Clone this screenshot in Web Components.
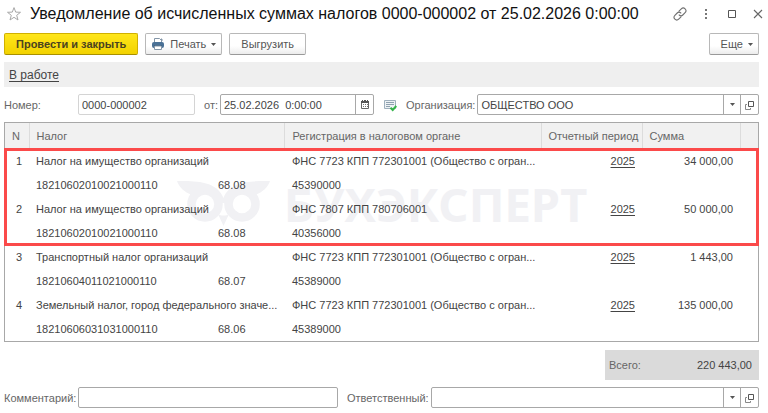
<!DOCTYPE html>
<html lang="ru">
<head>
<meta charset="UTF-8">
<meta name="viewport" content="width=device-width, initial-scale=1">
<title>Уведомление об исчисленных суммах налогов</title>
<style>
  body {
    margin: 0;
    background: #fff;
    color: #444;
    font: 11px/16px "Liberation Sans", Arial, sans-serif;
  }
</style>
</head>
<body>
<app-form>
  <app-titlebar slot="title">Уведомление об исчисленных суммах налогов 0000-000002 от 25.02.2026 0:00:00</app-titlebar>

  <app-toolbar slot="toolbar">
    <app-button primary>Провести и закрыть</app-button>
    <app-button icon="print" menu>Печать</app-button>
    <app-button>Выгрузить</app-button>
    <app-button slot="end" menu>Еще</app-button>
  </app-toolbar>

  <app-status slot="status">В работе</app-status>

  <app-row slot="fields">
    <app-field class="number" label="Номер:" value="0000-000002" wide-label light></app-field>
    <app-field class="date" label="от:" value="25.02.2026  0:00:00" action="calendar"></app-field>
    <app-icon name="posted"></app-icon>
    <app-field class="org" label="Организация:" value="ОБЩЕСТВО ООО" select action="open"></app-field>
  </app-row>

  <app-tax-table slot="table"></app-tax-table>
  <app-total slot="total" label="Всего:">220 443,00</app-total>

  <app-row slot="footer">
    <app-field class="comment" label="Комментарий:" wide-label></app-field>
    <app-field class="person" label="Ответственный:" select action="open"></app-field>
  </app-row>
</app-form>

<script>
const ICONS = {
  star: '<svg width="16" height="16" viewBox="0 0 16 16" fill="none" stroke="#a8a8a8"><path d="M8 1.600l1.700 4.500 4.800.2-3.800 3 1.300 4.700L8 11.300 4 14l1.300-4.700-3.800-3 4.800-.2z"/></svg>',
  link: '<svg width="14" height="14" viewBox="0 0 14 14" fill="none" stroke="#707070" stroke-width="1.1" stroke-linecap="round"><path d="M6 4.2l2.3-2.3a2.6 2.6 0 0 1 3.8 3.8L9.8 8a2.6 2.6 0 0 1-3.6 0"/><path d="M8 9.8l-2.3 2.3a2.6 2.6 0 0 1-3.8-3.8L4.2 6a2.6 2.6 0 0 1 3.6 0"/></svg>',
  dots: '<svg width="14" height="14" viewBox="0 0 14 14" fill="#777"><path d="M6 2h2v2H6zM6 6h2v2H6zM6 10h2v2H6z"/></svg>',
  maximize: '<svg width="14" height="14" viewBox="0 0 14 14" fill="none" stroke="#555"><path d="M3.500 3.500h7v7h-7z"/></svg>',
  close: '<svg width="14" height="14" viewBox="0 0 14 14" fill="none" stroke="#666" stroke-width="1.1"><path d="M3 3l8 8M11 3l-8 8"/></svg>',
  print: '<svg width="14" height="14" viewBox="0 0 14 14"><path d="M3.500 5.500v-4h5l2 2v2" fill="#fff" stroke="#8496a8"/><path d="M10 1l1.500 1.500V4H10z" fill="#8496a8"/><rect x="1" y="5" width="12" height="6" rx="2" fill="#4a7196"/><path d="M3 8.500h8" stroke="#2f5579"/><path d="M3.500 9h7v3.500h-7z" fill="#fff" stroke="#8496a8"/></svg>',
  calendar: '<svg width="12" height="12" viewBox="0 0 12 12"><path d="M2.500 2.500h7v7h-7z" fill="#fff" stroke="#666"/><path d="M2 2h8v2H2zM3 1h1v2H3zM8 1h1v2H8zM5 1h2v1H5z" fill="#555"/><path d="M4 5h1v1H4zM6 5h1v1H6zM8 5h1v1H8zM4 7h1v1H4zM6 7h1v1H6zM8 7h1v1H8z" fill="#777"/></svg>',
  open: '<svg width="12" height="12" viewBox="0 0 12 12" fill="none" stroke="#555"><path d="M4.500 2.500h5v5h-5z"/><path d="M3 5.500H1.500v5h5V9" stroke="#888"/></svg>',
  posted: '<svg width="14" height="14" viewBox="0 0 14 14"><path d="M1.500 2.500h11v8h-11z" fill="#eef2f5" stroke="#9fb0bd"/><path d="M3 4.500h8M3 6.500h8M3 8.500h4" stroke="#8fa2b0"/><path d="M7.500 9.800l2.200 2.200 3.600-4" fill="none" stroke="#35b44a" stroke-width="2"/></svg>',
  caret: '<svg width="5" height="3" viewBox="0 0 5 3" fill="#555"><path d="M0 0h5L2.500 3z"/></svg>',
  owl: '<svg width="96" height="48" viewBox="0 0 96 48" fill="none" stroke="#f1f1f4"><circle cx="29" cy="24" r="13.500" stroke-width="8.500"/><circle cx="66" cy="24" r="13.500" stroke-width="8.500"/><path d="M1 1c15 0 40-1 46.500 17C54 0 79 1 94 1c-2 6-7 11-15 14L66 11 50 23h-5L29 11l-13 4C8 12 3 7 1 1zM42 34c3 2 8 2 11 0l-5.500 12z" fill="#f1f1f4" stroke="none"/></svg>'
};

/**
 * Base class: copies the template of the component into an open shadow root
 */
class AppElement extends HTMLElement {
  connectedCallback() {
    if (this.shadowRoot) return;
    this.attachShadow({ mode: 'open' });
    this.shadowRoot.innerHTML = this.template();
  }
}

class AppIcon extends AppElement {
  template() {
    return `
      <style>
        :host { display: inline-flex; flex: none; }
        svg { display: block; }
      </style>
      ${ICONS[this.getAttribute('name')]}
    `;
  }
}

class AppForm extends AppElement {
  template() {
    return `
      <style>
        :host { display: block; }
        .form {
          display: flex;
          flex-direction: column;
          gap: 7px;
          padding: 0 9px 4px 4px;
        }
        .total {
          display: flex;
          justify-content: flex-end;
          padding: 1px 0 0;
        }
      </style>
      <slot name="title"></slot>
      <main class="form">
        <slot name="toolbar"></slot>
        <slot name="status"></slot>
        <slot name="fields"></slot>
        <slot name="table"></slot>
        <div class="total"><slot name="total"></slot></div>
        <slot name="footer"></slot>
      </main>
    `;
  }
}

class AppTitlebar extends AppElement {
  template() {
    return `
      <style>
        :host {
          display: flex;
          align-items: center;
          height: 28px;
          padding: 0 3px 5px 6px;
          color: #111;
        }
        h1 {
          flex: 1;
          margin: 0 0 0 8px;
          font-size: 16px;
          font-weight: normal;
          line-height: 20px;
          white-space: nowrap;
        }
        button {
          display: flex;
          padding: 0;
          border: 0;
          background: none;
        }
        .tools { display: flex; gap: 12px; }
      </style>
      <button type="button" aria-label="Избранное"><app-icon name="star"></app-icon></button>
      <h1><slot></slot></h1>
      <div class="tools">
        <button type="button" aria-label="Ссылка"><app-icon name="link"></app-icon></button>
        <button type="button" aria-label="Меню"><app-icon name="dots"></app-icon></button>
        <button type="button" aria-label="Развернуть"><app-icon name="maximize"></app-icon></button>
        <button type="button" aria-label="Закрыть"><app-icon name="close"></app-icon></button>
      </div>
    `;
  }
}

class AppToolbar extends AppElement {
  template() {
    return `
      <style>
        :host { display: flex; justify-content: space-between; }
        div { display: flex; gap: 7px; }
      </style>
      <div><slot></slot></div>
      <div><slot name="end"></slot></div>
    `;
  }
}

class AppButton extends AppElement {
  template() {
    const icon = this.getAttribute('icon');
    return `
      <style>
        :host { display: block; }
        button {
          display: flex;
          align-items: center;
          gap: 5px;
          height: 22px;
          padding: 0 11px;
          border: 1px solid #b8b8b8;
          border-bottom-color: #999;
          border-radius: 2px;
          background: linear-gradient(#fff 60%, #ececec);
          color: #555;
          font: inherit;
          white-space: nowrap;
        }
        :host([menu]) button { padding: 0 5px 0 11px; }
        :host([icon]) button { padding: 0 5px; }
        :host([primary]) button {
          border-color: #d0b000;
          border-bottom-color: #a89000;
          background: linear-gradient(#ffe61a, #f2d200);
          color: #4a4320;
          font-weight: bold;
        }
      </style>
      <button type="button">
        ${icon ? `<app-icon name="${icon}"></app-icon>` : ''}
        <slot></slot>
        ${this.hasAttribute('menu') ? '<app-icon name="caret"></app-icon>' : ''}
      </button>
    `;
  }
}

class AppStatus extends AppElement {
  template() {
    return `
      <style>
        :host {
          display: block;
          padding: 3px 5px 2px;
          background: #efefef;
          font-size: 12px;
          line-height: 20px;
        }
        a { color: #444; text-underline-offset: 2px; }
      </style>
      <a href="#"><slot></slot></a>
    `;
  }
}

class AppRow extends AppElement {
  template() {
    return `
      <style>
        :host { display: flex; align-items: center; gap: 9px; }
        ::slotted(.number) { flex: 0 0 191px; }
        ::slotted(.date) { flex: 0 0 170px; }
        ::slotted(.org) { flex: 1; }
        ::slotted(.comment) { flex: 1 1 334px; }
        ::slotted(.person) { flex: 1 1 412px; }
      </style>
      <slot></slot>
    `;
  }
}

class AppField extends AppElement {
  template() {
    const value = this.getAttribute('value') || '';
    const action = this.getAttribute('action');
    const control = this.hasAttribute('select')
      ? `<select id="control"><option>${value}</option></select><span class="caret"><app-icon name="caret"></app-icon></span>`
      : `<input id="control" type="text" value="${value}">`;
    return `
      <style>
        :host { display: flex; align-items: center; gap: 2px; min-width: 0; }
        label { flex: none; color: #666; white-space: nowrap; }
        :host([wide-label]) label { width: 72px; }
        .box {
          display: flex;
          flex: 1;
          min-width: 0;
          height: 19px;
          border: 1px solid #a8a8a8;
          border-radius: 2px;
          background: #fff;
        }
        :host([light]) .box { border-color: #d4d4d4; }
        .control { position: relative; display: flex; flex: 1; min-width: 0; }
        input, select {
          flex: 1;
          min-width: 0;
          padding: 0 3px;
          border: 0;
          outline: 0;
          background: none;
          color: #444;
          font: inherit;
          appearance: none;
          white-space: pre;
        }
        /* the list arrow lies over the right end of the select */
        .caret {
          position: absolute;
          inset: 0 0 0 auto;
          display: flex;
          align-items: center;
          justify-content: center;
          width: 16px;
          border-left: 1px solid #a8a8a8;
          pointer-events: none;
        }
        button {
          display: flex;
          align-items: center;
          justify-content: center;
          width: 18px;
          padding: 0;
          border: 0;
          border-left: 1px solid #a8a8a8;
          background: none;
        }
      </style>
      <label for="control">${this.getAttribute('label')}</label>
      <div class="box">
        <div class="control">${control}</div>
        ${action ? `<button type="button" aria-label="Выбрать"><app-icon name="${action}"></app-icon></button>` : ''}
      </div>
    `;
  }
}

class AppTaxTable extends AppElement {
  get rows() {
    return [
      { n: 1, tax: 'Налог на имущество организаций', kbk: '18210602010021000110', account: '68.08', office: 'ФНС 7723 КПП 772301001 (Общество с огран...', oktmo: '45390000', year: 2025, sum: '34 000,00' },
      { n: 2, tax: 'Налог на имущество организаций', kbk: '18210602010021000110', account: '68.08', office: 'ФНС 7807 КПП 780706001', oktmo: '40356000', year: 2025, sum: '50 000,00' },
      { n: 3, tax: 'Транспортный налог организаций', kbk: '18210604011021000110', account: '68.07', office: 'ФНС 7723 КПП 772301001 (Общество с огран...', oktmo: '45389000', year: 2025, sum: '1 443,00' },
      { n: 4, tax: 'Земельный налог, город федерального значе...', kbk: '18210606031031000110', account: '68.06', office: 'ФНС 7723 КПП 772301001 (Общество с огран...', oktmo: '45389000', year: 2025, sum: '135 000,00' }
    ];
  }

  rowHtml(row) {
    return `
      <tr>
        <td class="num">${row.n}</td>
        <td colspan="2">${row.tax}</td>
        <td>${row.office}</td>
        <td class="right"><a href="#">${row.year}</a></td>
        <td class="right">${row.sum}</td>
        <td></td>
      </tr>
      <tr>
        <td></td>
        <td>${row.kbk}</td>
        <td>${row.account}</td>
        <td>${row.oktmo}</td>
        <td></td>
        <td></td>
        <td></td>
      </tr>
    `;
  }

  template() {
    const rows = this.rows;
    return `
      <style>
        :host { display: block; position: relative; border: 1px solid #a8a8a8; }
        table {
          position: relative;
          width: 100%;
          border-collapse: collapse;
          table-layout: fixed;
        }
        th, td {
          overflow: hidden;
          padding: 0 0 0 7px;
          text-align: left;
          text-overflow: ellipsis;
          white-space: nowrap;
        }
        th {
          height: 26px;
          border-left: 1px solid #dcdcdc;
          background: #f1f1f1;
          color: #666;
          font-weight: normal;
        }
        th:first-child { border-left: 0; }
        td { height: 24px; }
        .num { padding: 0 7px 0 0; text-align: right; }
        .right { padding-right: 7px; text-align: right; }
        a { color: inherit; text-underline-offset: 2px; }
        .marked { outline: 3px solid #fb4a4a; outline-offset: -2px; }
        /* the watermark lies under the rows */
        .watermark {
          position: absolute;
          inset: 53px 0 auto 0;
          display: flex;
          justify-content: center;
          align-items: center;
          gap: 12px;
          color: #f1f1f4;
          font: bold 47px/56px "Noto Sans", sans-serif;
        }
      </style>
      <div class="watermark" aria-hidden="true"><app-icon name="owl"></app-icon>БУХЭКСПЕРТ</div>
      <table>
        <colgroup>
          <col style="width: 24px"><col><col style="width: 74px"><col style="width: 34%">
          <col style="width: 101px"><col style="width: 98px"><col style="width: 18px">
        </colgroup>
        <thead>
          <tr>
            <th>N</th>
            <th colspan="2">Налог</th>
            <th>Регистрация в налоговом органе</th>
            <th>Отчетный период</th>
            <th>Сумма</th>
            <th></th>
          </tr>
        </thead>
        <tbody class="marked">${rows.slice(0, 2).map(this.rowHtml).join('')}</tbody>
        <tbody>${rows.slice(2).map(this.rowHtml).join('')}</tbody>
      </table>
    `;
  }
}

class AppTotal extends AppElement {
  template() {
    return `
      <style>
        :host {
          display: flex;
          justify-content: space-between;
          width: 143px;
          padding: 7px 7px 7px 4px;
          background: #dadada;
        }
        .label { color: #666; }
      </style>
      <span class="label">${this.getAttribute('label')}</span>
      <output><slot></slot></output>
    `;
  }
}

customElements.define('app-icon', AppIcon);
customElements.define('app-form', AppForm);
customElements.define('app-titlebar', AppTitlebar);
customElements.define('app-toolbar', AppToolbar);
customElements.define('app-button', AppButton);
customElements.define('app-status', AppStatus);
customElements.define('app-row', AppRow);
customElements.define('app-field', AppField);
customElements.define('app-tax-table', AppTaxTable);
customElements.define('app-total', AppTotal);
</script>
</body>
</html>
